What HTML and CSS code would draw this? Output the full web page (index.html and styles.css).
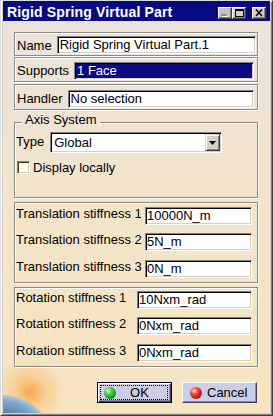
FILE: index.html
```html
<!DOCTYPE html>
<html>
<head>
<meta charset="utf-8">
<link rel="stylesheet" href="styles.css">
</head>
<body>
<div class="window">
  <div class="titlebar">
    <span class="title">Rigid Spring Virtual Part</span>
    <span class="tb tb-min"><svg width="12" height="10" viewBox="0 0 12 10"><rect x="3" y="7" width="6" height="2" fill="#f0f0f0"/><rect x="2" y="6" width="6" height="2" fill="#8c8c8c"/></svg></span>
    <span class="tb"><svg width="12" height="10" viewBox="0 0 12 10"><rect x="2.5" y="1.5" width="8" height="7" fill="none" stroke="#000"/><rect x="2" y="1" width="9" height="2" fill="#000"/></svg></span>
    <span class="tb tb-close"><svg width="12" height="10" viewBox="0 0 12 10"><path d="M3 1.5l6 6.5M9 1.5l-6 6.5" stroke="#000" stroke-width="1.6" fill="none"/></svg></span>
  </div>
  <div class="content">
    <div class="frame f-name">
      <span class="lbl">Name</span><span class="field">Rigid Spring Virtual Part.1</span>
    </div>
    <div class="frame f-supports">
      <span class="lbl">Supports</span><span class="field sel">1 Face</span>
    </div>
    <div class="frame f-handler">
      <span class="lbl">Handler</span><span class="field">No selection</span>
    </div>
    <div class="frame group">
      <span class="legend">Axis System</span>
      <div class="type-row">
        <span class="lbl">Type</span>
        <span class="combo"><span class="combo-text">Global</span><span class="combo-btn"><svg width="7" height="4" viewBox="0 0 7 4"><path d="M0 0h7L3.5 4z" fill="#000"/></svg></span></span>
      </div>
      <div class="check-row">
        <span class="checkbox"></span><span class="check-lbl">Display locally</span>
      </div>
    </div>
    <div class="frame stiff trans">
      <div class="srow"><span class="lbl">Translation stiffness 1</span><span class="field">10000N_m</span></div>
      <div class="srow"><span class="lbl">Translation stiffness 2</span><span class="field">5N_m</span></div>
      <div class="srow r3"><span class="lbl">Translation stiffness 3</span><span class="field">0N_m</span></div>
    </div>
    <div class="frame stiff rot">
      <div class="srow"><span class="lbl">Rotation stiffness 1</span><span class="field">10Nxm_rad</span></div>
      <div class="srow"><span class="lbl">Rotation stiffness 2</span><span class="field">0Nxm_rad</span></div>
      <div class="srow r3"><span class="lbl">Rotation stiffness 3</span><span class="field">0Nxm_rad</span></div>
    </div>
    <div class="buttons">
      <span class="btn btn-default"><span class="btn-inner"><span class="orb orb-green"></span><span class="btn-text">OK</span></span></span>
      <span class="btn btn-cancel"><span class="orb orb-red"></span><span class="btn-text2">Cancel</span></span>
    </div>
  </div>
</div>
</body>
</html>
```
FILE: styles.css
```css
* { box-sizing: border-box; margin: 0; padding: 0; }
html, body { width: 273px; height: 416px; overflow: hidden; }
body {
  font: 13px/16px "Liberation Sans", Arial, sans-serif;
  color: #000;
  background: #d4d0c8;
}
.window {
  width: 273px;
  height: 416px;
  display: flex;
  flex-direction: column;
  background: #d4d0c8;
  border: 1px solid;
  border-color: #dcdcdc #404040 #404040 #dcdcdc;
  padding: 0 2px 2px 2px;
  box-shadow: inset 1px 1px #fff, inset -1px -1px #808080;
}
.titlebar {
  height: 20px;
  flex: none;
  display: flex;
  align-items: flex-start;
  background: #0a0a80;
  color: #fff;
  padding: 4px 4px 0 4px;
}
.title {
  flex: 1;
  font-weight: bold;
  font-size: 14px;
  line-height: 15px;
  letter-spacing: 0.15px;
  white-space: nowrap;
}
.tb {
  width: 14px;
  height: 12px;
  margin-top: 2px;
  background: #d4d0c8;
  border: 1px solid;
  border-color: #fff #404040 #404040 #fff;
  box-shadow: inset -1px -1px #808080;
  display: flex;
  align-items: center;
  justify-content: center;
}
.tb-min { background: #c4c4c4; }
.tb-close { margin-left: 6px; }

.content {
  flex: 1;
  display: flex;
  flex-direction: column;
  padding: 11px 12px 0 11px;
  background:
    radial-gradient(circle 58px at 0px 452px, #2f5979 0%, #4d7ea6 62%, #7ea8c8 88%, #a6c4da 97%, rgba(166,196,218,0) 100%) fixed,
    radial-gradient(circle 34px at 30px 392px, rgba(248,160,60,0.85) 0%, rgba(250,185,100,0.5) 45%, rgba(250,210,150,0) 100%) fixed,
    linear-gradient(#eee3da 0px, #efe3d6 100px, #f4e4cb 200px, #f8e4c0 416px) fixed;
}

.frame {
  border: 1px solid #8a8a8a;
  box-shadow: inset 1px 1px #fff, 1px 1px #fff;
  display: flex;
  align-items: flex-start;
  flex: none;
}
.lbl { white-space: nowrap; padding: 0 5px 0 2px; }
.field {
  display: block;
  height: 18px;
  flex: 1;
  background: #fff;
  border: 1px solid;
  border-color: #808080 #fff #fff #808080;
  box-shadow: inset 1px 1px #000, inset -1px -1px #d4d0c8;
  padding: 0 2px;
  line-height: 16px;
  white-space: nowrap;
  overflow: hidden;
}
.field.sel {
  background: #0a0a80;
  color: #fff;
}

.f-name { padding: 3px 1px 1px 0; }
.f-name .lbl { margin-top: 1.5px; }
.f-supports { margin-top: 1px; padding: 4px 3px 1px 0; height: 25px; }
.f-supports .lbl { margin-top: 1px; }
.f-handler { margin-top: 2px; padding: 5px 3px 1px 0; height: 26px; }
.f-handler .lbl { margin-top: 1px; }

.group {
  margin-top: 12px;
  flex-direction: column;
  padding: 0 0 23px 1px;
}
.legend {
  display: block;
  margin: -11px 0 0 6px;
  padding: 0 3px;
  line-height: 16px;
  white-space: nowrap;
  background: linear-gradient(#eee3da 0px, #efe3d6 100px, #f4e4cb 200px, #f8e4c0 416px) fixed;
}
.type-row {
  display: flex;
  align-items: flex-start;
  margin-top: 4px;
  height: 21px;
}
.type-row .lbl { padding: 0 6px 0 0; margin-top: 1.5px; }
.combo {
  width: 172px;
  height: 21px;
  display: flex;
  background: #fff;
  border: 1px solid;
  border-color: #808080 #fff #fff #808080;
  box-shadow: inset 1px 1px #000, inset -1px -1px #d4d0c8;
  padding: 1px;
}
.combo-text { flex: 1; padding: 0 2px; line-height: 16px; margin-top: 1px; }
.combo-btn {
  width: 15px;
  height: 17px;
  background: #d4d0c8;
  border: 1px solid;
  border-color: #d4d0c8 #404040 #404040 #d4d0c8;
  box-shadow: inset 1px 1px #fff, inset -1px -1px #808080;
  display: flex;
  align-items: center;
  justify-content: center;
}
.check-row {
  display: flex;
  align-items: center;
  height: 13px;
  margin-top: 8px;
}
.checkbox {
  width: 13px;
  height: 13px;
  margin-left: 1px;
  background: #fffee6;
  border: 1px solid;
  border-color: #808080 #fff #fff #808080;
  box-shadow: inset 1px 1px #404040, inset -1px -1px #d4d0c8;
}
.check-lbl { margin-left: 3px; white-space: nowrap; }

.stiff {
  flex-direction: column;
  align-items: stretch;
  gap: 8px;
  margin-top: 4px;
}
.trans { padding: 4px 5px 4px 1px; }
.rot { padding: 3px 5px 4px 1px; }
.srow {
  display: flex;
  justify-content: space-between;
  align-items: flex-start;
  height: 18px;
}
.srow.r3 { margin-top: 1px; }
.srow .lbl { padding: 0; margin-top: -1.5px; }
.trans .field { flex: none; width: 107px; padding-left: 1px; }
.rot .field { flex: none; width: 115px; padding-left: 1px; }

.buttons {
  display: flex;
  justify-content: flex-end;
  gap: 10px;
  margin-top: 15px;
  padding-right: 1px;
}
.btn {
  width: 75px;
  height: 21px;
  display: flex;
  align-items: center;
  background: #cdcde8;
}
.btn-default {
  border: 1px solid #000;
  box-shadow: inset 1px 1px #fff, inset -1px -1px #404060, inset -2px -2px #8a8aa8;
  padding: 2px 3px 2px 2px;
}
.btn-inner {
  flex: 1;
  height: 100%;
  display: flex;
  align-items: center;
  border: 1px dotted #000;
}
.btn-cancel {
  border: 1px solid;
  border-color: #fff #404060 #404060 #fff;
  box-shadow: inset -1px -1px #8a8aa8;
}
.orb {
  width: 12px;
  height: 12px;
  border-radius: 50%;
  flex: none;
}
.orb-green {
  margin-left: 3px;
  background: radial-gradient(circle at 35% 32%, #d8ffd0 0, #4fd04a 30%, #16901a 70%, #0a4a0c 100%);
}
.orb-red {
  margin-left: 7px;
  background: radial-gradient(circle at 35% 32%, #ffe0d8 0, #f0503c 30%, #b01810 70%, #5a0806 100%);
}
.btn-text { flex: 1; text-align: center; padding-right: 4px; }
.btn-text2 { margin-left: 5px; }
```
